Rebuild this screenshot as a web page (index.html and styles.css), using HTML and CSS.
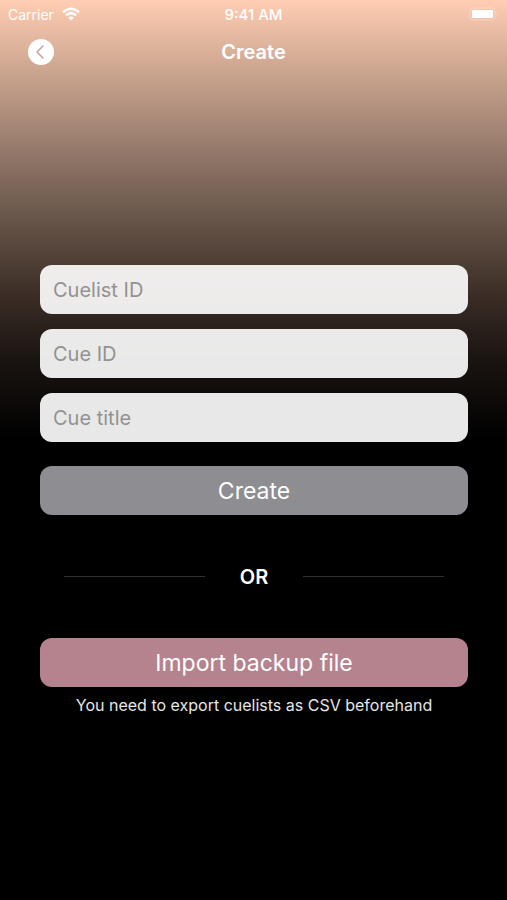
FILE: index.html
```html
<!DOCTYPE html>
<html lang="en">
	<head>
		<meta charset="UTF-8">
		<meta name="viewport" content="width=device-width, initial-scale=1">
		<title>Create</title>
		<link rel="stylesheet" href="styles.css">
	</head>
	<body>
		<div class="status">
			<div class="carrier">
				<span>Carrier</span>
				<svg class="wifi" viewBox="0 0 18 14" fill="none" stroke="#fff" stroke-width="2.5">
					<path d="M1 5.2Q9 -1.8 17 5.2"/>
					<path d="M4 8.3Q9 3.9 14 8.3"/>
					<path d="M9 13.6L6.2 10.8Q9 8.4 11.8 10.8Z" fill="#fff" stroke="none"/>
				</svg>
			</div>
			<span class="time">9:41 AM</span>
			<svg class="battery" viewBox="0 0 30 14">
				<rect x="1" y="1" width="25" height="12" rx="3" fill="none" stroke="#fff" stroke-opacity="0.3"/>
				<rect x="3" y="3" width="21" height="8" rx="1" fill="#fff"/>
				<path d="M27.5 5Q29 7 27.5 9Z" fill="#fff" fill-opacity="0.35"/>
			</svg>
		</div>
		<header class="header">
			<button class="back" type="button" aria-label="Back">
				<svg viewBox="0 0 26 26">
					<circle cx="13" cy="13" r="13" fill="#fff"/>
					<path d="M15 7L9 13L15 19" fill="none" stroke="#c9a59a" stroke-width="1.6" stroke-linecap="round" stroke-linejoin="round"/>
				</svg>
			</button>
			<h1 class="title">Create</h1>
		</header>
		<main class="main">
			<form class="form">
				<input class="field" type="text" placeholder="Cuelist ID" aria-label="Cuelist ID">
				<input class="field" type="text" placeholder="Cue ID" aria-label="Cue ID">
				<input class="field" type="text" placeholder="Cue title" aria-label="Cue title">
				<button class="btn create" type="button">Create</button>
			</form>
			<div class="or"><span>OR</span></div>
			<button class="btn import" type="button">Import backup file</button>
			<p class="hint">You need to export cuelists as CSV beforehand</p>
		</main>
	</body>
</html>
```
FILE: styles.css
```css
*{
	margin: 0;
	padding: 0;
	box-sizing: border-box;
}
html{
	min-height: 100%;
	background-color: #000;
}
body{
	min-height: 100vh;
	color: #fff;
	font-family: Inter, "Liberation Sans", sans-serif;
	background: linear-gradient(#ffcdb2 0, #c5a08b 80px, #80695c 180px, #5b4a3f 240px, #382b24 300px, #1a1411 360px, #000 440px) no-repeat;
}
button, input{
	border: none;
	font-family: inherit;
}
svg{
	display: block;
}
/* status bar */
.status{
	height: 28px;
	padding: 0 8px;
	display: grid;
	grid-template-columns: 1fr auto 1fr;
	align-items: center;
	font-size: 14px;
}
.carrier{
	display: flex;
	align-items: center;
	gap: 8px;
}
.wifi{
	width: 18px;
	height: 14px;
}
.time{
	font-size: 15px;
	font-weight: 500;
}
.battery{
	width: 30px;
	height: 14px;
	justify-self: end;
}
/* header */
.header{
	height: 48px;
	padding: 0 28px;
	display: grid;
	grid-template-columns: 1fr auto 1fr;
	align-items: center;
}
.back{
	width: 26px;
	height: 26px;
	background: none;
	border-radius: 50%;
}
.title{
	font-size: 20px;
	font-weight: 600;
}
/* content */
.main{
	padding: 189px 39px 0 40px;
}
.form{
	display: flex;
	flex-direction: column;
	gap: 15px;
}
.field{
	width: 100%;
	height: 49px;
	padding: 0 13px;
	border-radius: 12px;
	background-color: rgba(255,255,255,0.91);
	color: #222;
	font-size: 20px;
}
.field::placeholder{
	color: #929292;
	opacity: 1;
}
.btn{
	display: block;
	width: 100%;
	height: 49px;
	border-radius: 12px;
	color: #fff;
	font-size: 23px;
}
.create{
	margin-top: 9px;
	background-color: #8e8d92;
}
.or{
	height: 123px;
	padding: 0 24px;
	display: flex;
	align-items: center;
	gap: 35px;
	font-size: 20px;
	font-weight: 600;
}
.or::before, .or::after{
	content: "";
	flex: 1;
	height: 1px;
	background-color: #303030;
}
.import{
	background-color: #b5838d;
}
.hint{
	margin-top: 8px;
	text-align: center;
	font-size: 16px;
	line-height: 20px;
	color: #e6e6e6;
}
```
